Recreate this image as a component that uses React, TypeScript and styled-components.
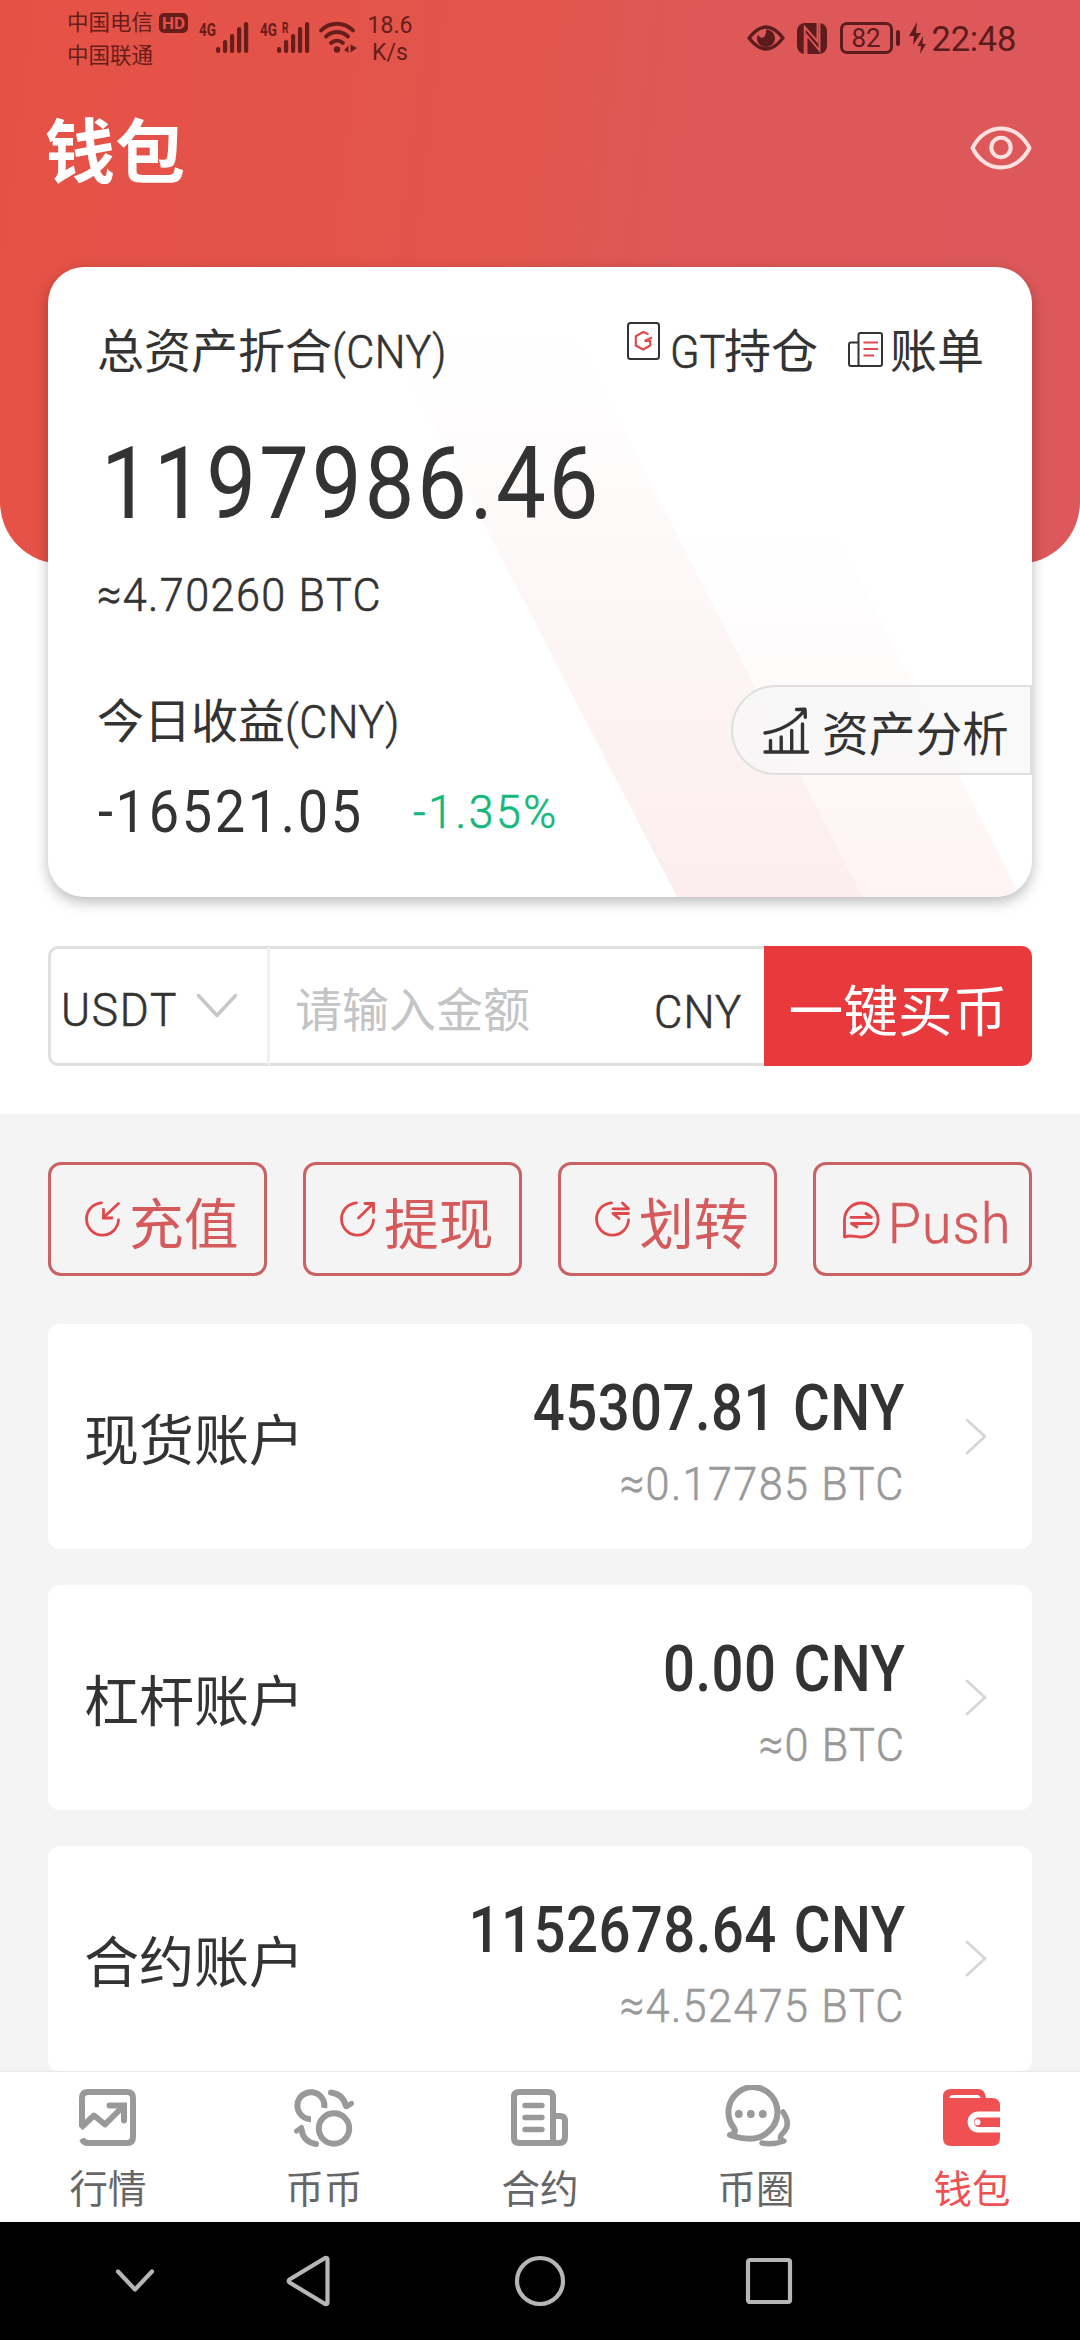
import React from 'react';
import styled, { createGlobalStyle } from 'styled-components';

const GlobalStyle = createGlobalStyle`
  body {
    margin: 0;
    background: #fff;
    color: #333;
    font-family: Roboto, "Noto Sans CJK SC", sans-serif;
  }
  * { box-sizing: border-box; }
  svg { display: block; flex: none; }
`;

const Screen = styled.div`
  width: 1080px;
  height: 2340px;
  display: flex;
  flex-direction: column;
  overflow: hidden;
  background: #fff;
`;

const Hero = styled.header`
  height: 564px;
  flex: none;
  border-radius: 0 0 62px 62px;
  background: linear-gradient(97deg, #e65145 0%, #e2554d 46%, #de5857 62%, #dd585b 100%);
`;

/* Squeezes Roboto horizontally toward the proportions of a DIN face;
   the light cut gets a hairline stroke to land between light and regular */
const Din = styled.span<{ $scale?: number; $gap?: number; $origin?: string; $weight?: number }>`
  display: inline-block;
  white-space: nowrap;
  font-weight: ${(p) => p.$weight ?? 300};
  -webkit-text-stroke: ${(p) => (p.$weight ? 0 : 0.6)}px currentColor;
  letter-spacing: ${(p) => p.$gap ?? 0}px;
  transform: scaleX(${(p) => p.$scale ?? 0.92});
  transform-origin: ${(p) => p.$origin ?? 'left'} center;
`;

/* ---------- status bar ---------- */

const StatusBar = styled.div`
  height: 75px;
  padding: 6px 64px 0 67px;
  display: flex;
  align-items: flex-start;
  color: #671d19;
`;

const Carriers = styled.div`
  font-size: 21.5px;
  line-height: 33px;
  width: 92px;
`;

const HdBadge = styled.div`
  width: 29px;
  height: 20px;
  margin-top: 7px;
  border-radius: 5px;
  background: currentColor;
  display: flex;
  justify-content: center;
  font-size: 17px;
  line-height: 20px;
  font-weight: 700;
  span { color: #e45349; }
`;

const Speed = styled.div`
  width: 60px;
  margin: 6px 0 0 3px;
  font-size: 23px;
  line-height: 27px;
  text-align: center;
`;

const StatusIcon = styled.div<{ $top: number; $left?: number }>`
  margin: ${(p) => p.$top}px 0 0 ${(p) => p.$left ?? 0}px;
`;

const StatusRight = styled.div`
  margin-left: auto;
  display: flex;
  align-items: center;
  height: 64px;
  color: #5c1b1d;
`;

const Battery = styled.div`
  width: 53px;
  height: 32px;
  margin-left: 13px;
  border: 3px solid currentColor;
  border-radius: 7px;
  display: flex;
  align-items: center;
  justify-content: center;
  font-size: 26px;
  line-height: 26px;
`;

const BatteryNub = styled.div`
  width: 4px;
  height: 16px;
  margin: 0 9px 0 3px;
  border-radius: 2px;
  background: currentColor;
`;

const Clock = styled.div`
  margin-left: 6px;
  padding-top: 2px;
  font-size: 34.5px;
  line-height: 40px;
  letter-spacing: -0.3px;
`;

/* ---------- title ---------- */

const TitleRow = styled.div`
  display: flex;
  align-items: center;
  justify-content: space-between;
  padding: 0 48px 0 45px;
  height: 146px;
`;

const Title = styled.h1`
  margin: 12px 0 0;
  font-size: 70px;
  line-height: 80px;
  font-weight: 700;
  color: #fff;
`;

/* ---------- asset card ---------- */

const AssetCard = styled.section`
  position: relative;
  z-index: 1;
  flex: none;
  width: 984px;
  height: 630px;
  margin: -297px 48px 0;
  padding: 55px 0 0 49px;
  border-radius: 36px;
  background: #fff;
  box-shadow: 0 5px 14px rgba(0, 0, 0, 0.27);
  overflow: hidden;
`;

const Stripes = styled.svg`
  position: absolute;
  inset: 0;
  z-index: -1;
`;

const CardHead = styled.div`
  display: flex;
  align-items: center;
  height: 60px;
  padding-right: 49px;
  font-size: 47px;
  line-height: 60px;
`;

const CardLinks = styled.div`
  display: flex;
  margin-left: auto;
`;

const CardLink = styled.div<{ $width: number }>`
  display: flex;
  width: ${(p) => p.$width}px;
  white-space: nowrap;
`;

const IconSlot = styled.div<{ $width: number; $top: number }>`
  width: ${(p) => p.$width}px;
  padding-top: ${(p) => p.$top}px;
  flex: none;
`;

const GtWord = styled.div`
  width: 54px;
  flex: none;
`;

const Total = styled.div`
  margin-top: 42px;
  padding-left: 4px;
  font-size: 101px;
  line-height: 120px;
`;

const TotalBtc = styled.div`
  margin-top: 21px;
  font-size: 47px;
  line-height: 60px;
`;

const CardFoot = styled.div`
  display: flex;
  justify-content: space-between;
  align-items: flex-start;
  margin-top: 60px;
`;

const Earnings = styled.div`
  padding-top: 7px;
  font-size: 47px;
  line-height: 60px;
`;

const EarningsRow = styled.div`
  display: flex;
  align-items: center;
  height: 70px;
  margin-top: 25px;
`;

const EarningsValue = styled.div`
  width: 316px;
  padding-left: 1px;
  font-size: 60px;
`;

const EarningsRate = styled.div`
  font-size: 46px;
  color: #14b87c;
`;

const AnalysisButton = styled.div`
  display: flex;
  align-items: center;
  width: 301px;
  height: 90px;
  padding-left: 30px;
  border: 2px solid #dfdfdf;
  border-radius: 45px 0 0 45px;
  background: rgba(247, 247, 247, 0.75);
  font-size: 46.7px;
  line-height: 60px;
  white-space: nowrap;
  svg { margin-right: 12px; }
  span { padding-top: 9px; }
`;

/* ---------- quick buy ---------- */

const QuickBuy = styled.section`
  flex: none;
  display: flex;
  height: 120px;
  margin: 49px 48px 48px;
  font-size: 47px;
  line-height: 60px;
`;

const CoinSelect = styled.div`
  display: flex;
  align-items: center;
  width: 222px;
  padding: 8px 0 0 10px;
  border: 3px solid #dfdfdf;
  border-right-color: #f0f0f0;
  border-radius: 10px 0 0 10px;
`;

const CoinName = styled.div`
  width: 135px;
`;

const ChevronSlot = styled.div`
  margin-top: -8px;
`;

const AmountField = styled.div`
  flex: 1;
  display: flex;
  justify-content: space-between;
  align-items: center;
  padding: 9px 12px 0 25px;
  border: solid #dfdfdf;
  border-width: 3px 0;
`;

const Placeholder = styled.span`
  color: #c4c4c6;
`;

const CurrencyLabel = styled.div`
  width: 98px;
  padding-top: 3px;
`;

const BuyButton = styled.div`
  width: 268px;
  padding-top: 11px;
  display: flex;
  align-items: center;
  justify-content: center;
  border-radius: 0 10px 10px 0;
  background: #e8393c;
  color: #fff;
  font-size: 54.8px;
`;

/* ---------- body ---------- */

const Body = styled.main`
  flex: none;
  height: 957px;
  padding: 48px 48px 0;
  background: #f4f4f4;
  overflow: hidden;
`;

const Actions = styled.div`
  display: grid;
  grid-template-columns: repeat(4, 1fr);
  gap: 36px;
  height: 114px;
`;

const ActionButton = styled.div<{ $pad: number }>`
  display: flex;
  align-items: flex-start;
  padding-left: ${(p) => p.$pad}px;
  border: 3px solid #ca6163;
  border-radius: 13px;
  color: #d55a5c;
  font-size: 54px;
  line-height: 64px;
  svg { margin: 36px 8px 0 0; }
`;

const ActionText = styled.span<{ $size?: number; $top?: number }>`
  padding-top: ${(p) => p.$top ?? 28}px;
  font-size: ${(p) => p.$size ?? 54.8}px;
  white-space: nowrap;
`;

const Accounts = styled.div`
  display: flex;
  flex-direction: column;
  gap: 36px;
  margin-top: 48px;
`;

const AccountRow = styled.div`
  display: flex;
  align-items: center;
  height: 225px;
  padding: 0 45px 0 36px;
  border-radius: 12px;
  background: #fff;
`;

const AccountName = styled.div`
  padding-top: 9px;
  font-size: 55px;
  line-height: 64px;
`;

const AccountValues = styled.div`
  display: flex;
  flex-direction: column;
  align-items: flex-end;
  margin-left: auto;
  padding: 10px 60px 0 0;
`;

const Amount = styled.div`
  font-size: 64px;
  line-height: 80px;
  word-spacing: 3px;
`;

const AmountBtc = styled.div`
  margin-top: 5px;
  font-size: 47px;
  line-height: 60px;
  color: #999;
`;

/* ---------- tab bar ---------- */

const TabBar = styled.nav`
  flex: none;
  height: 151px;
  display: grid;
  grid-template-columns: repeat(5, 1fr);
  border-top: 1px solid #e9e9e9;
  background: #fff;
`;

const Tab = styled.div<{ $active?: boolean }>`
  display: flex;
  flex-direction: column;
  align-items: center;
  padding-top: 13px;
  color: ${(p) => (p.$active ? '#ef5052' : '#999')};
  span {
    margin-top: 20px;
    font-size: 38.5px;
    line-height: 46px;
    color: ${(p) => (p.$active ? '#ef5052' : '#666')};
  }
`;

const SystemNav = styled.div`
  flex: none;
  height: 118px;
  display: grid;
  grid-template-columns: 270px 76px 388px 70px;
  align-items: center;
  justify-items: center;
  background: #000;
`;

/* ---------- icons ---------- */

const Signal = ({ roaming }: { roaming?: boolean }) => (
  <svg width="52" height="42" viewBox="0 -8 52 42" fill="currentColor">
    <text x="0" y="15" fontSize="19" fontWeight="700" textLength="17" lengthAdjust="spacingAndGlyphs">4G</text>
    {roaming && (
      <text x="22" y="12" fontSize="15" fontWeight="700" textLength="6.5" lengthAdjust="spacingAndGlyphs">R</text>
    )}
    <rect x="17" y="26" width="4.2" height="6" rx="2" />
    <rect x="24" y="19" width="4.2" height="13" rx="2" />
    <rect x="31" y="13" width="4.2" height="19" rx="2" />
    <rect x="38" y="6" width="4.2" height="26" rx="2" />
    <rect x="45" y="1" width="4.2" height="31" rx="2" />
  </svg>
);

const Wifi = () => (
  <svg width="38" height="33" viewBox="0 0 38 33" fill="none" stroke="currentColor" strokeWidth="3.8" strokeLinecap="round">
    <path d="M2 9.5C11 .5 25 .5 34 9.5" />
    <path d="M7 15.500C13.500 9.500 22.500 9.500 29 15.500" />
    <path d="M12 22C15.500 18.700 20.500 18.700 24 22" />
    <circle cx="18" cy="28.500" r="3.200" fill="currentColor" stroke="none" />
    <path d="M25 29l4.500-4.500v7.500zM38 27l-6.500-3.500v8z" fill="currentColor" stroke="none" />
  </svg>
);

const EyeComfort = () => (
  <svg width="38" height="26" viewBox="0 0 38 26" fill="none">
    <path d="M2 13C9 4 14 2 19 2s10 2 17 11c-7 9-12 11-17 11S9 22 2 13z" stroke="currentColor" strokeWidth="3.4" strokeLinejoin="round" />
    <path d="M19 4.500c5 0 9 3.800 9 8.700S24 22 19 22s-9-3.800-9-8.500c0-1.500.4-2.800 1-4 .8 2.500 3 3.800 5 3 2.600-1 3-4.500 3-8z" fill="currentColor" />
  </svg>
);

const Nfc = () => (
  <svg width="30" height="31" viewBox="0 0 30 31">
    <rect width="30" height="31" rx="8" fill="currentColor" />
    <path d="M7.700 31V4L20.500 18.500V0" fill="none" stroke="#df5856" strokeWidth="1.900" />
    <path d="M9.500 31V12L22.500 27.500V0" fill="none" stroke="#df5856" strokeWidth="1.900" />
  </svg>
);

const Bolts = () => (
  <svg width="17" height="32" viewBox="0 0 17 32" fill="currentColor">
    <path d="M8 0L0 14h5L4 23l8-12H7z" />
    <path d="M14 14L8.500 24H12l-1 8 6-10h-3.500z" />
  </svg>
);

const Eye = () => (
  <svg width="62" height="44" viewBox="0 0 62 44" fill="none" stroke="#ffe1e0" strokeWidth="4">
    <path d="M2.500 22C9 9 20 2.500 31 2.500S53 9 59.500 22C53 35 42 41.500 31 41.500S9 35 2.500 22z" strokeLinejoin="round" />
    <circle cx="31" cy="21.500" r="9.700" />
  </svg>
);

const GtIcon = () => (
  <svg width="33" height="38" viewBox="0 0 33 38" fill="none">
    <rect x="1" y="1" width="31" height="36" rx="2.500" stroke="#333" strokeWidth="2" />
    <path d="M21.500 12.200L16.200 10 8.800 14.200v9.300l7.400 4 7-4V19H18M25 15.500l-7.500 3.500" stroke="#e04a4c" strokeWidth="2.200" />
  </svg>
);

const BillIcon = () => (
  <svg width="35" height="35" viewBox="0 0 35 35" fill="none" stroke="#333" strokeWidth="2">
    <rect x="10.500" y="1" width="23.500" height="33" rx="2" />
    <path d="M10.500 10.500H3q-2 0-2 2V32q0 2 2 2h8" />
    <path d="M15.500 10.500H30M15.500 17H30M15.500 23.500H26" stroke="#e04a4c" />
  </svg>
);

const TrendIcon = () => (
  <svg width="47" height="47" viewBox="0 0 47 47" fill="none" stroke="#333" strokeWidth="3.400" strokeLinecap="round" strokeLinejoin="round">
    <path d="M2 45H44.500M7.500 45V33.500M18.200 45V30M28.700 45V23.500M39.500 45V17" />
    <path d="M2 26C18 23.500 30 17.500 41 4M33.500 2.500L42 2.200l.3 8" />
  </svg>
);

const ringPath = 'M16.500 1.800A16 16.200 0 1 0 33.500 19';

const DepositIcon = () => (
  <svg width="36" height="36" viewBox="0 0 36 36" fill="none" stroke="#e1484b" strokeWidth="2.800" strokeLinecap="round">
    <path d={ringPath} />
    <path d="M33.500 2.500L18.500 16.500M18.500 8.500v8.500h8.500" />
  </svg>
);

const WithdrawIcon = () => (
  <svg width="36" height="36" viewBox="0 0 36 36" fill="none" stroke="#e1484b" strokeWidth="2.800" strokeLinecap="round">
    <path d={ringPath} />
    <path d="M18.500 17L33 2.800M25 2.500h8.500v9" />
  </svg>
);

const TransferIcon = () => (
  <svg width="36" height="36" viewBox="0 0 36 36" fill="none" stroke="#e1484b" strokeWidth="2.800" strokeLinecap="round" strokeLinejoin="round">
    <path d={ringPath} />
    <path d="M18 7.800H33.500L27.500 2M33.500 12.500H18L24 17.500" />
  </svg>
);

const PushIcon = () => (
  <svg width="38" height="38" viewBox="0 0 38 38" fill="none" stroke="#e1484b" strokeWidth="2.800" strokeLinecap="round" strokeLinejoin="round">
    <path d="M2.500 36V19A16.800 17 0 1 1 19.500 36C13 36 8 33.500 2.500 36z" />
    <path d="M9 16.300H29.500L24 12.500M29.500 22.500H9.500L15 26" />
  </svg>
);

const ChevronDown = () => (
  <svg width="42" height="26" viewBox="0 0 42 26" fill="none" stroke="#c8c8c8" strokeWidth="3.500" strokeLinecap="round" strokeLinejoin="round">
    <path d="M2.500 2.500L21 22.500 39.500 2.500" />
  </svg>
);

const ChevronRight = () => (
  <svg width="22" height="37" viewBox="0 0 22 37" fill="none" stroke="#d6d6d6" strokeWidth="2.800" strokeLinecap="round" strokeLinejoin="round">
    <path d="M2 2L20 18.500 2 35" />
  </svg>
);

const tabSvg = { height: 62, fill: 'none', stroke: 'currentColor', strokeWidth: 6 } as const;

const MarketIcon = () => (
  <svg {...tabSvg} width="58" viewBox="0 -4 58 62">
    <path d="M3 37V9q0-6 6-6H48q6 0 6 6V48q0 6-6 6H9q-5 0-6-4.500" />
    <path d="M1.500 39L15 26.500 26 35.500 43 18.500" strokeLinejoin="round" />
    <path d="M30.500 16.500H45V31.500" strokeLinecap="round" />
    <path d="M-1 50L7 42" stroke="#fff" strokeWidth="4" />
  </svg>
);

const SpotIcon = () => (
  <svg {...tabSvg} width="60" viewBox="0 -3 60 62">
    <path d="M30.200 20A13.500 13.500 0 1 0 17 31.200" />
    <circle cx="40" cy="40.500" r="15.200" />
    <path d="M37 4.500Q49 6 52 18" strokeLinecap="round" />
    <path d="M52.500 18.500l5-3" strokeLinecap="round" strokeWidth="5" />
    <path d="M22 56Q9 54 7.500 41" strokeLinecap="round" />
    <path d="M7.500 39.500l-5 3.500" strokeLinecap="round" strokeWidth="5" />
  </svg>
);

const ContractIcon = () => (
  <svg {...tabSvg} width="58" viewBox="0 -4 58 62">
    <path d="M42 54H8q-5 0-5-5V8q0-5 5-5H37q5 0 5 5V54" />
    <path d="M42 27H49q5 0 5 5V48q0 6-6 6H42" />
    <path d="M14 16.500H31M14 28.500H31M14 40.500H31" strokeLinecap="round" strokeWidth="5.400" />
  </svg>
);

const CircleIcon = () => (
  <svg {...tabSvg} width="68" viewBox="-1 -2 68 62" strokeLinejoin="round">
    <path d="M7 48Q14 46 11 41A24.500 25 0 1 1 46 44Q34 57 7 48z" />
    <path d="M60 25Q69 38 59 47Q55 52 61 54Q50 58 39 56" strokeLinecap="round" strokeWidth="5.500" />
    <g fill="currentColor" stroke="none">
      <circle cx="15.800" cy="27" r="3.900" />
      <circle cx="27.800" cy="27" r="3.900" />
      <circle cx="39.800" cy="27" r="3.900" />
    </g>
  </svg>
);

const WalletIcon = () => (
  <svg width="58" height="62" viewBox="0 -4 58 62" fill="currentColor">
    <path d="M8 0H35q7 0 8 9h6q8 0 8 8V49q0 8-8 8H8q-8 0-8-8V8Q0 0 8 0z" />
    <path d="M6.500 9q0-3 4-3H34q3 0 3.500 3z" fill="#fff" />
    <path d="M58 22.500H35a10.500 10.500 0 0 0 0 21H58V38H34.500a5 5 0 0 1 0-9.500H58z" fill="#fff" />
    <circle cx="34.500" cy="33.200" r="3" fill="#fff" />
  </svg>
);

const navStroke = { fill: 'none', stroke: '#b6b6b6', strokeWidth: 4.2, strokeLinecap: 'round', strokeLinejoin: 'round' } as const;

/* ---------- data ---------- */

const accounts = [
  { name: '现货账户', amount: '45307.81 CNY', btc: '≈0.17785 BTC' },
  { name: '杠杆账户', amount: '0.00 CNY', btc: '≈0 BTC' },
  { name: '合约账户', amount: '1152678.64 CNY', btc: '≈4.52475 BTC' },
];

const tabs = [
  { label: '行情', Icon: MarketIcon },
  { label: '币币', Icon: SpotIcon },
  { label: '合约', Icon: ContractIcon },
  { label: '币圈', Icon: CircleIcon },
  { label: '钱包', Icon: WalletIcon, active: true },
];

const actions = [
  { label: '充值', Icon: DepositIcon },
  { label: '提现', Icon: WithdrawIcon },
  { label: '划转', Icon: TransferIcon },
];

export default function App() {
  return (
    <Screen>
      <GlobalStyle />
      <Hero>
        <StatusBar>
          <Carriers>中国电信<br />中国联通</Carriers>
          <HdBadge><span>HD</span></HdBadge>
          <StatusIcon $top={7} $left={11}><Signal /></StatusIcon>
          <StatusIcon $top={7} $left={9}><Signal roaming /></StatusIcon>
          <StatusIcon $top={15} $left={7}><Wifi /></StatusIcon>
          <Speed>18.6<br />K/s</Speed>
          <StatusRight>
            <EyeComfort />
            <StatusIcon $top={0} $left={12}><Nfc /></StatusIcon>
            <Battery>82</Battery>
            <BatteryNub />
            <Bolts />
            <Clock>22:48</Clock>
          </StatusRight>
        </StatusBar>
        <TitleRow>
          <Title>钱包</Title>
          <Eye />
        </TitleRow>
      </Hero>

      <AssetCard>
        <Stripes width="984" height="630" viewBox="0 0 984 630">
          <defs>
            <linearGradient id="stripeMain" x1="0" y1="0" x2="0" y2="630" gradientUnits="userSpaceOnUse">
              <stop offset="0.1" stopColor="#fff" />
              <stop offset="0.4" stopColor="#fefafa" />
              <stop offset="0.65" stopColor="#fdf4f4" />
              <stop offset="1" stopColor="#fceeee" />
            </linearGradient>
            <linearGradient id="stripeSide" x1="0" y1="0" x2="0" y2="630" gradientUnits="userSpaceOnUse">
              <stop offset="0.42" stopColor="#fff" />
              <stop offset="0.7" stopColor="#fefafa" />
              <stop offset="1" stopColor="#fef4f3" />
            </linearGradient>
          </defs>
          <path d="M303 0H492L815 630H629z" fill="url(#stripeMain)" />
          <path d="M625 260H786L972 630H815z" fill="url(#stripeSide)" />
        </Stripes>
        <CardHead>
          总资产折合<Din $gap={0.5}>(CNY)</Din>
          <CardLinks>
            <CardLink $width={221}>
              <IconSlot $width={43} $top={0}><GtIcon /></IconSlot>
              <GtWord><Din>GT</Din></GtWord>
              持仓
            </CardLink>
            <CardLink $width={135}>
              <IconSlot $width={42} $top={10}><BillIcon /></IconSlot>
              账单
            </CardLink>
          </CardLinks>
        </CardHead>
        <Total><Din $scale={0.88} $gap={3.1} $weight={400}>1197986.46</Din></Total>
        <TotalBtc><Din $gap={1.5}>≈4.70260 BTC</Din></TotalBtc>
        <CardFoot>
          <Earnings>
            今日收益<Din $gap={0.5}>(CNY)</Din>
            <EarningsRow>
              <EarningsValue><Din $scale={0.9} $gap={3} $weight={400}>-16521.05</Din></EarningsValue>
              <EarningsRate><Din $scale={0.97} $gap={2.6}>-1.35%</Din></EarningsRate>
            </EarningsRow>
          </Earnings>
          <AnalysisButton>
            <TrendIcon />
            <span>资产分析</span>
          </AnalysisButton>
        </CardFoot>
      </AssetCard>

      <QuickBuy>
        <CoinSelect>
          <CoinName><Din $scale={0.94} $gap={1.9}>USDT</Din></CoinName>
          <ChevronSlot><ChevronDown /></ChevronSlot>
        </CoinSelect>
        <AmountField>
          <Placeholder>请输入金额</Placeholder>
          <CurrencyLabel><Din $scale={0.93} $gap={1.2}>CNY</Din></CurrencyLabel>
        </AmountField>
        <BuyButton>一键买币</BuyButton>
      </QuickBuy>

      <Body>
        <Actions>
          {actions.map(({ label, Icon }) => (
            <ActionButton key={label} $pad={34}>
              <Icon />
              <ActionText>{label}</ActionText>
            </ActionButton>
          ))}
          <ActionButton $pad={26}>
            <PushIcon />
            <ActionText $size={56} $top={27}><Din $scale={0.95} $gap={1.4}>Push</Din></ActionText>
          </ActionButton>
        </Actions>
        <Accounts>
          {accounts.map((a) => (
            <AccountRow key={a.name}>
              <AccountName>{a.name}</AccountName>
              <AccountValues>
                <Amount><Din $scale={0.88} $gap={0.5} $weight={500} $origin="right">{a.amount}</Din></Amount>
                <AmountBtc><Din $gap={1.5} $origin="right">{a.btc}</Din></AmountBtc>
              </AccountValues>
              <ChevronRight />
            </AccountRow>
          ))}
        </Accounts>
      </Body>

      <TabBar>
        {tabs.map(({ label, Icon, active }) => (
          <Tab key={label} $active={active}>
            <Icon />
            <span>{label}</span>
          </Tab>
        ))}
      </TabBar>

      <SystemNav>
        <svg width="40" height="24" viewBox="0 0 40 24" {...navStroke}>
          <path d="M3 2.500L20 20.500 37 2.500" />
        </svg>
        <svg width="44" height="52" viewBox="0 0 44 52" {...navStroke}>
          <path d="M39.500 2.800q2 0 2 2V47q0 2.200-2 2.200L3.500 27.500q-1.500-1.500 0-3z" />
        </svg>
        <svg width="52" height="52" viewBox="0 0 52 52" {...navStroke}>
          <circle cx="26" cy="26" r="23" />
        </svg>
        <svg width="48" height="48" viewBox="0 0 48 48" {...navStroke}>
          <rect x="3" y="3" width="42" height="42" rx="2" />
        </svg>
      </SystemNav>
    </Screen>
  );
}
